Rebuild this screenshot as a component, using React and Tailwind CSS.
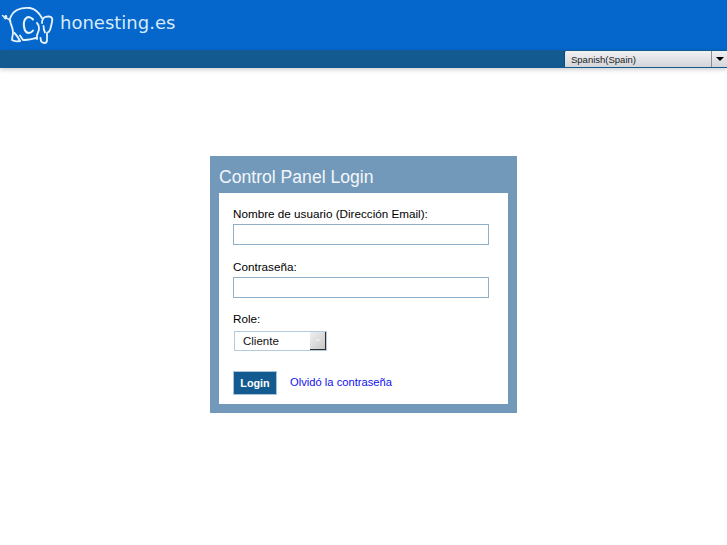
import React from 'react';

function ElephantLogo() {
    return (
        <svg width="54" height="44" viewBox="0 0 54 44" fill="none" stroke="#e6f3fb" strokeWidth="1.8" strokeLinecap="round" strokeLinejoin="round" className="shrink-0">
            {/* tail */}
            <path d="M2.500 12.500l2.500 1 1-1.500 1 2-1.500 2z" fill="#e6f3fb" strokeWidth="1" />
            <path d="M6 15c2 .5 3.500 1.500 4.500 3" />
            {/* back */}
            <path d="M10 16c1-4 3.500-7 7-9 4-2 9-2.500 13-2 5 1 9 4.500 12 10" />
            {/* rear leg and belly */}
            <path d="M10 18c1 4 3 7 3 11 0 3-1 6-1 8 2 1.500 5 1.500 8 1" />
            <path d="M14.500 30c2 2 4 5 5.500 8" />
            <path d="M20 32.500c1 1.500 2 3 3 4.500 4 0 8-1 13-2" />
            {/* C */}
            <path d="M33 16.500c-1.500-2-4.500-3-6-2-2.500 1.500-3.500 5.500-3 9 .5 4 2.500 6.500 5 6.500 1.500 0 3-1 4-2.500" strokeWidth="2.100" />
            {/* front leg */}
            <path d="M37 20c1.500 1.500 2 3.500 2 5.500 0 2.500-1.500 4.500-2 6.500v4" />
            {/* ear and trunk */}
            <path d="M42 20c0-3 1-5 3-6 2-.5 5-.5 6 0 1.500 1 1.500 3 1 5-.5 3-1.500 6-2 8-.5 1.500-2 2.500-3 3v7c0 2-1 3-2.500 3-1.500 0-3-1-3.500-2l-.5-3" />
            <path d="M43.500 23c0 2 .5 4.500 1.500 6.500" />
        </svg>
    );
}

export default function App() {
    return (
        <div className="min-h-[545px] bg-white font-['Liberation_Sans',Arial,sans-serif] text-[11.7px] text-black overflow-hidden">
            <div className="h-[50px] bg-[#0566cb] flex items-center">
                <ElephantLogo />
                <span className="ml-[6px] font-['DejaVu_Sans',sans-serif] text-[18px] text-[#d5ebf9] leading-none -mt-[4px]">honesting.es</span>
            </div>
            <div className="h-[18px] bg-[#125a90] shadow-[0_2px_4px_rgba(0,0,0,0.18)] flex justify-end items-start pt-px">
                <div className="w-[163px] h-[16px] flex bg-gradient-to-b from-[#f0f1f3] to-[#d3d5da] border-l border-[#0f4a78] rounded-tl-[2px]">
                    <span className="flex-1 pl-[6px] text-[9.500px] leading-[17px] text-[#222]">Spanish(Spain)</span>
                    <span className="w-[16px] border-l border-[#8a8f96] flex items-center justify-center">
                        <span className="w-0 h-0 border-x-[4px] border-x-transparent border-t-[4px] border-t-black"></span>
                    </span>
                </div>
            </div>

            <div className="mt-[88px] mx-auto w-[307px] h-[257px] bg-[#7299ba] p-[9px] pt-0 flex flex-col">
                <h1 className="h-[37px] text-[17.600px] leading-[42px] text-[#f2f6fa]">Control Panel Login</h1>
                <div className="flex-1 bg-white pl-[14px] pt-[14px]">
                    <label className="block leading-[14px]">Nombre de usuario (Dirección Email):</label>
                    <input type="text" className="block mt-[3px] w-[256px] h-[21px] bg-white border border-[#8fb0ca] outline-none" />
                    <label className="block mt-[15px] leading-[14px]">Contraseña:</label>
                    <input type="password" className="block mt-[3px] w-[256px] h-[21px] bg-white border border-[#8fb0ca] outline-none" />
                    <label className="block mt-[14px] leading-[14px]">Role:</label>
                    <div className="ml-[1px] mt-[5px] w-[93px] h-[20px] flex border border-[#b4cbdd]">
                        <span className="flex-1 pl-[8px] text-[11.500px] leading-[18px] text-[#111]">Cliente</span>
                        <span className="w-[16px] bg-gradient-to-br from-[#f0f0f0] to-[#c8c8c8] border-r border-b border-[#2e2e2e] flex items-center justify-center">
                            <span className="w-0 h-0 border-x-[3px] border-x-transparent border-t-[3px] border-t-[#ececec]"></span>
                        </span>
                    </div>
                    <div className="mt-[20px] flex items-center">
                        <button className="w-[44px] h-[24px] bg-[#125a90] border border-[#a9c3d8] text-white text-[10.800px] font-bold">Login</button>
                        <a href="#" className="ml-[13px] -mt-[2px] text-[11.200px] text-[#1010ee]">Olvidó la contraseña</a>
                    </div>
                </div>
            </div>
        </div>
    );
}
